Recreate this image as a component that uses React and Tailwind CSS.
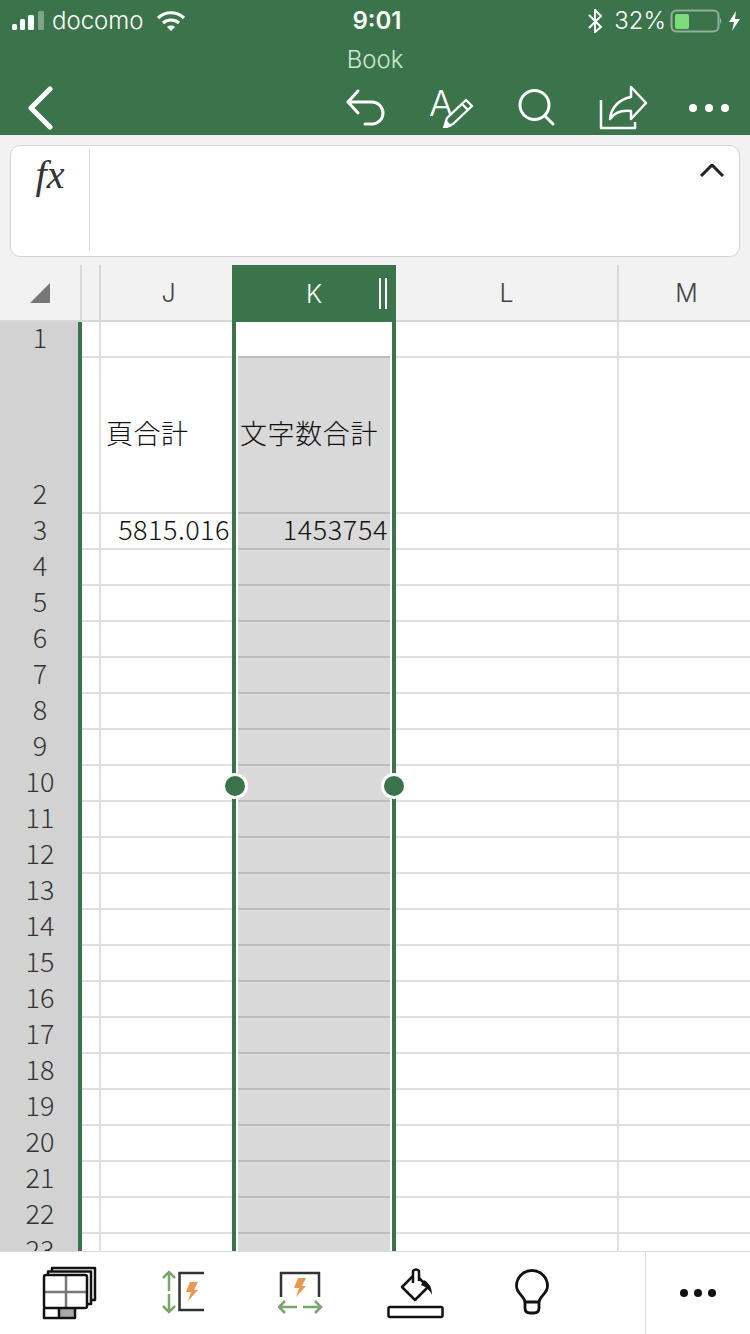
import React from 'react';

const GREEN = '#3b734b';

const rows = Array.from({ length: 23 }, (_, i) => i + 1);

const jText = { 2: '頁合計', 3: '5815.016' };
const kText = { 2: '文字数合計', 3: '1453754' };

const StatusBar = () => (
  <div className="flex items-center justify-between relative h-[42px] pl-[12px] pr-[10px] text-white text-[24px] font-['Inter','Liberation_Sans',sans-serif] font-light">
    <div className="flex items-center">
      <svg width="33" height="20" viewBox="12 10 33 20" fill="#fff">
        <rect x="12" y="23" width="5" height="6" rx="1.5" />
        <rect x="20" y="18" width="5" height="11" rx="1.5" />
        <rect x="28" y="14" width="6" height="15" rx="1.5" />
        <rect x="38" y="10" width="6" height="19" rx="1.5" fill="#ffffff" fillOpacity="0.35" />
      </svg>
      <span className="ml-[7px] leading-none">docomo</span>
      <svg className="ml-[12px]" width="30" height="20" viewBox="154 10 30 20" fill="none" stroke="#fff" strokeWidth="3.2">
        <path d="M156 17 C163 10 175 10 182 17" />
        <path d="M161 22 C165 18 173 18 177 22" />
        <path d="M165 26 L169 30 L173 26 C171 24 167 24 165 26 Z" fill="#fff" stroke="none" />
      </svg>
    </div>
    <div className="mr-[19px] font-semibold">9:01</div>
    <div className="flex items-center">
      <svg width="16" height="24" viewBox="587 8 16 24" fill="none" stroke="#fff" strokeWidth="2">
        <path d="M589 14 L601 26 L595 31 V9 L601 15 L589 27" />
      </svg>
      <span className="ml-[11px] leading-none">32%</span>
      <svg className="ml-[4px]" width="70" height="24" viewBox="670 8 70 24">
        <rect x="671.5" y="9.5" width="47" height="21" rx="5" fill="none" stroke="#ffffff" strokeOpacity="0.45" strokeWidth="2" />
        <rect x="675" y="13" width="14" height="15" rx="2" fill="#7bdc7c" />
        <path d="M720 17 a4 4 0 0 1 0 6 Z" fill="#ffffff" fillOpacity="0.45" />
        <path d="M736 10 L729 21 H734 L732 30 L740 18 H735 Z" fill="#fff" />
      </svg>
    </div>
  </div>
);

const NavBar = () => (
  <div className="flex items-center h-[55px] text-white">
    <svg className="ml-[26px]" width="30" height="44" viewBox="26 80 30 44" fill="none" stroke="#fff" strokeWidth="5" strokeLinecap="round" strokeLinejoin="round">
      <path d="M50 83 L31 102 L50 121" />
    </svg>
    <svg className="ml-[290px]" width="40" height="40" viewBox="346 82 40 40" fill="none" stroke="#fff" strokeWidth="3" strokeLinecap="round" strokeLinejoin="round">
      <path d="M358 85 L348 96 L358 107 M348 96 H372 A11 11 0 0 1 372 118 H365" />
    </svg>
    <svg className="ml-[44px]" width="46" height="40" viewBox="430 82 46 40">
      <text x="429" y="110" fontSize="36" fontWeight="300" fill="#fff" fontFamily="Inter, sans-serif">A</text>
      <path d="M444 122 L447 112 L466 94 L472 100 L453 118 Z M462 98 L468 104" fill={GREEN} stroke="#fff" strokeWidth="2.4" strokeLinejoin="round" />
      <path d="M443 123 L446 114 L452 120 Z" fill="#fff" />
    </svg>
    <svg className="ml-[41px]" width="40" height="40" viewBox="517 82 40 40" fill="none" stroke="#fff" strokeWidth="3" strokeLinecap="round">
      <circle cx="534.5" cy="99" r="14.5" />
      <path d="M545 110 L553 118" />
    </svg>
    <svg className="ml-[42px]" width="50" height="46" viewBox="599 78 50 46" fill="none" stroke="#fff" strokeWidth="2.5" strokeLinejoin="round">
      <path d="M601 93 V121 H635 V115" />
      <path d="M631 80 L646 96 L631 112 V104 C622 103 614 106 610 112 C611 100 620 92 631 90 Z" />
    </svg>
    <svg className="ml-[39px]" width="44" height="12" viewBox="688 96 44 12" fill="#fff">
      <circle cx="693" cy="102" r="4" />
      <circle cx="709" cy="102" r="4" />
      <circle cx="725" cy="102" r="4" />
    </svg>
  </div>
);

const FormulaBar = () => (
  <div className="bg-[#f2f2f2] h-[130px] px-[10px] pt-[10px]">
    <div className="flex h-[112px] bg-white border border-[#d4d4d4] rounded-[10px]">
      <div className="w-[79px] h-[100px] my-[4px] border-r border-[#d6d6d6] flex justify-center">
        <span className="font-['Liberation_Serif',serif] italic text-[40px] leading-[50px] text-[#333]">fx</span>
      </div>
      <div className="flex-1 flex justify-end pt-[18px] pr-[15px]">
        <svg width="24" height="14" viewBox="701 166 24 14" fill="none" stroke="#222" strokeWidth="3">
          <path d="M702 178 L713 167 L724 178" />
        </svg>
      </div>
    </div>
  </div>
);

const ColumnHeaders = () => (
  <div className="flex h-[57px] bg-[#f2f2f2] text-[25px] text-[#444] font-['Inter','Liberation_Sans',sans-serif] font-light">
    <div className="w-[82px] border-r-2 border-b-2 border-[#d8d8d8] flex items-center pl-[30px]">
      <svg width="20" height="20" viewBox="0 0 20 20">
        <path d="M20 0 V20 H0 Z" fill="#777" />
      </svg>
    </div>
    <div className="w-[19px] border-r-2 border-b-2 border-[#d8d8d8]"></div>
    <div className="w-[131px] border-b-2 border-[#d8d8d8] flex items-center justify-center pl-[4px] pt-[2px]">J</div>
    <div className="w-[164px] bg-[#3b734b] text-white flex items-center pl-[74px]">
      <span className="pt-[2px]">K</span>
      <div className="ml-[57px] w-[8px] h-[31px] border-x-2 border-white"></div>
    </div>
    <div className="w-[223px] border-r-2 border-b-2 border-[#d8d8d8] flex items-center justify-center pt-[2px]">L</div>
    <div className="w-[131px] border-b-2 border-[#d8d8d8] flex items-center justify-center pl-[4px] pt-[2px]">M</div>
  </div>
);

const Row = ({ n }) => {
  const tall = n === 2;
  const gray = n > 1;
  return (
    <div className={`flex shrink-0 ${tall ? 'h-[156px]' : 'h-[36px]'}`}>
      <div className={`w-[78px] bg-[#d2d2d2] flex justify-center pl-[2px] text-[#333] text-[27px] leading-[30px] ${tall ? 'items-end pb-[6px]' : 'items-start'}`}>
        {n}
      </div>
      <div className="w-[4px] bg-[#3b734b]"></div>
      <div className="w-[19px] border-r-2 border-b-2 border-[#e0e0e0]"></div>
      <div className={`w-[131px] border-b-2 border-[#e0e0e0] flex items-center pb-[4px] text-[#111] text-[27px] tracking-[0.5px] ${tall ? 'justify-start pl-[5px]' : 'justify-end pr-[2px]'}`}>
        {jText[n]}
      </div>
      <div className="w-[164px] border-x-4 border-[#3b734b] bg-white px-[2px]">
        <div className={`h-full border-b-2 flex items-center pb-[4px] text-[#111] text-[27px] tracking-[0.6px] ${gray ? 'bg-[#d9d9d9] border-[#bcbcbc]' : 'bg-white border-[#bcbcbc]'} ${tall ? 'justify-start pl-[2px]' : 'justify-end pr-[2px]'}`}>
          {kText[n]}
        </div>
      </div>
      <div className="w-[223px] border-r-2 border-b-2 border-[#e0e0e0]"></div>
      <div className="w-[131px] border-b-2 border-[#e0e0e0]"></div>
    </div>
  );
};

const BottomBar = () => (
  <div className="flex h-[83px] shrink-0 bg-white border-t border-[#dcdcdc]">
    <div className="flex-1 flex items-center">
      <svg className="ml-[41px]" width="57" height="54" viewBox="41 1266 57 54" fill="none" stroke="#111" strokeWidth="2.5" strokeLinejoin="round">
        <path d="M52 1271 V1268 H95 V1300 H91" />
        <path d="M48 1275 V1271.500 H91 V1304 H88" />
        <path d="M60 1309 H76 V1318 H60 Z" fill="#a8a8a8" stroke="none" />
        <path d="M66 1276 V1308 M44 1292 H87" stroke="#777" />
        <rect x="44" y="1275" width="43" height="33" rx="2" />
        <path d="M44 1308 V1318 H75 V1308 M59 1308 V1318" />
      </svg>
      <svg className="ml-[63px]" width="46" height="48" viewBox="161 1270 46 48">
        <path d="M169 1292 V1273 M163 1279 L169 1273 L175 1279 M169 1295 V1313 M163 1307 L169 1313 L175 1307" fill="none" stroke="#7aa56f" strokeWidth="2.5" />
        <path d="M204 1274 H179.500 V1311 H204" fill="none" stroke="#333" strokeWidth="2.5" />
        <path d="M190 1283 H198 L194 1291 H198 L188 1302 L191 1293 H186 Z" fill="#e8984f" />
      </svg>
      <svg className="ml-[71px]" width="46" height="48" viewBox="278 1270 46 48">
        <path d="M281 1298 V1274 H319 V1298" fill="none" stroke="#333" strokeWidth="2.5" />
        <path d="M298 1279 H306 L302 1287 H306 L296 1298 L299 1289 H294 Z" fill="#e8984f" />
        <path d="M297 1308 H279 M285 1302 L279 1308 L285 1314 M303 1308 H321 M315 1302 L321 1308 L315 1314" fill="none" stroke="#7aa56f" strokeWidth="2.5" />
      </svg>
      <svg className="ml-[62px]" width="60" height="52" viewBox="386 1268 60 52" fill="none" stroke="#111" strokeWidth="2.5" strokeLinejoin="round">
        <rect x="388.500" y="1308" width="54" height="10" rx="1.500" />
        <path d="M415 1275 L402 1288 L415 1301 L428 1288 Z" />
        <path d="M413 1284 V1272 Q416 1269 419 1272 V1282" fill="#fff" />
        <path d="M424 1281 Q432 1285 432 1296 Q429 1289 421 1286 Z" fill="#111" stroke="none" />
      </svg>
      <svg className="ml-[68px]" width="36" height="48" viewBox="514 1270 36 48" fill="none" stroke="#111" strokeWidth="2.8" strokeLinejoin="round">
        <path d="M525 1303 C524 1296 516.500 1295 516.500 1287 A15.500 15.500 0 0 1 547.500 1287 C547.500 1295 540 1296 539 1303 Z" />
        <path d="M525 1303 V1309 Q525 1314 530 1314 H534 Q539 1314 539 1309 V1303" />
      </svg>
    </div>
    <div className="w-[105px] border-l border-[#dcdcdc] flex items-center justify-center">
      <svg width="38" height="10" viewBox="671 1288 38 10" fill="#111">
        <circle cx="676" cy="1293" r="4" />
        <circle cx="690" cy="1293" r="4" />
        <circle cx="704" cy="1293" r="4" />
      </svg>
    </div>
  </div>
);

export default function App() {
  return (
    <div className="relative w-[750px] h-[1334px] flex flex-col overflow-hidden bg-white font-['Noto_Sans_CJK_JP','Noto_Sans',sans-serif] font-light">
      <div className="bg-[#3b734b] h-[135px] shrink-0">
        <StatusBar />
        <div className="text-center text-[#c9ead2] text-[24px] leading-[36px] h-[38px] font-['Inter','Liberation_Sans',sans-serif] font-light">Book</div>
        <NavBar />
      </div>
      <FormulaBar />
      <ColumnHeaders />
      <div className="flex-1 overflow-hidden">
        {rows.map((n) => (
          <Row key={n} n={n} />
        ))}
      </div>
      <BottomBar />
      {/* selection handles */}
      <div className="absolute left-[222px] top-[773px] w-[26px] h-[26px] rounded-full bg-[#3b734b] border-[3px] border-white"></div>
      <div className="absolute left-[381px] top-[773px] w-[26px] h-[26px] rounded-full bg-[#3b734b] border-[3px] border-white"></div>
    </div>
  );
}
